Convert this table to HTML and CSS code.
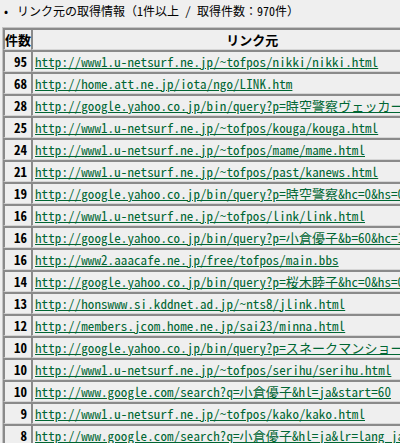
FILE: index.html
```html
<!DOCTYPE html>
<html lang="ja">
<head>
<meta charset="utf-8">
<title>リンク元の取得情報</title>
<link rel="stylesheet" href="styles.css">
</head>
<body>
<div class="title"><span class="bullet">•</span><span>リンク元の取得情報（1件以上 / 取得件数：970件）</span></div>
<table class="tbl">
<tr><th class="hnum">件数</th><th class="hlink">リンク元</th></tr>
<tr><td class="num">95</td><td class="link"><a href="#">http://www1.u-netsurf.ne.jp/~tofpos/nikki/nikki.html</a></td></tr>
<tr><td class="num">68</td><td class="link"><a href="#">http://home.att.ne.jp/iota/ngo/LINK.htm</a></td></tr>
<tr><td class="num">28</td><td class="link"><a href="#">http://google.yahoo.co.jp/bin/query?p=時空警察ヴェッカー&amp;hc=0&amp;hs=0</a></td></tr>
<tr><td class="num">25</td><td class="link"><a href="#">http://www1.u-netsurf.ne.jp/~tofpos/kouga/kouga.html</a></td></tr>
<tr><td class="num">24</td><td class="link"><a href="#">http://www1.u-netsurf.ne.jp/~tofpos/mame/mame.html</a></td></tr>
<tr><td class="num">21</td><td class="link"><a href="#">http://www1.u-netsurf.ne.jp/~tofpos/past/kanews.html</a></td></tr>
<tr><td class="num">19</td><td class="link"><a href="#">http://google.yahoo.co.jp/bin/query?p=時空警察&amp;hc=0&amp;hs=0</a></td></tr>
<tr><td class="num">16</td><td class="link"><a href="#">http://www1.u-netsurf.ne.jp/~tofpos/link/link.html</a></td></tr>
<tr><td class="num">16</td><td class="link"><a href="#">http://google.yahoo.co.jp/bin/query?p=小倉優子&amp;b=60&amp;hc=1&amp;hs=0</a></td></tr>
<tr><td class="num">16</td><td class="link"><a href="#">http://www2.aaacafe.ne.jp/free/tofpos/main.bbs</a></td></tr>
<tr><td class="num">14</td><td class="link"><a href="#">http://google.yahoo.co.jp/bin/query?p=桜木睦子&amp;hc=0&amp;hs=0</a></td></tr>
<tr><td class="num">13</td><td class="link"><a href="#">http://honswww.si.kddnet.ad.jp/~nts8/jlink.html</a></td></tr>
<tr><td class="num">12</td><td class="link"><a href="#">http://members.jcom.home.ne.jp/sai23/minna.html</a></td></tr>
<tr><td class="num">10</td><td class="link"><a href="#">http://google.yahoo.co.jp/bin/query?p=スネークマンショー&amp;hc=0</a></td></tr>
<tr><td class="num">10</td><td class="link"><a href="#">http://www1.u-netsurf.ne.jp/~tofpos/serihu/serihu.html</a></td></tr>
<tr><td class="num">10</td><td class="link"><a href="#">http://www.google.com/search?q=小倉優子&amp;hl=ja&amp;start=60</a></td></tr>
<tr><td class="num">9</td><td class="link"><a href="#">http://www1.u-netsurf.ne.jp/~tofpos/kako/kako.html</a></td></tr>
<tr><td class="num">8</td><td class="link"><a href="#">http://www.google.com/search?q=小倉優子&amp;hl=ja&amp;lr=lang_ja</a></td></tr>
</table>
</body>
</html>
```

FILE: styles.css
```css
html, body {
  margin: 0;
  padding: 0;
  overflow: hidden;
}
body {
  background: #efefef;
  color: #000;
  font-family: "Noto Sans Mono CJK JP", "Noto Sans CJK JP", "DejaVu Sans Mono", monospace;
  font-size: 13px;
}
.title {
  display: flex;
  align-items: center;
  height: 20px;
  font-size: 12px;
  padding-left: 4px;
  white-space: nowrap;
}
.bullet {
  width: 13px;
  font-size: 12px;
}
.tbl {
  border-collapse: separate;
  border-spacing: 0;
  margin: 7px 0 0 2px;
  border-top: 1px solid #c4c4c4;
  border-left: 1px solid #c4c4c4;
}
.tbl th, .tbl td {
  border-top: 2px solid #8a8a8a;
  border-left: 2px solid #8a8a8a;
  border-bottom: 1px solid #d6d6d6;
  height: 19px;
  line-height: 16px;
  padding: 0;
  white-space: nowrap;
}
.hnum {
  width: 27px;
  text-align: center;
  font-weight: bold;
}
.hlink {
  width: 450px;
  text-align: center;
  font-weight: bold;
  padding: 0 2px;
}
.num {
  width: 23px;
  padding: 0 4px 0 0 !important;
  text-align: right;
  font-weight: bold;
}
.link {
  padding: 0 2px !important;
}
.link a {
  color: #006633;
  text-decoration: underline;
  letter-spacing: 0.1px;
}
```
